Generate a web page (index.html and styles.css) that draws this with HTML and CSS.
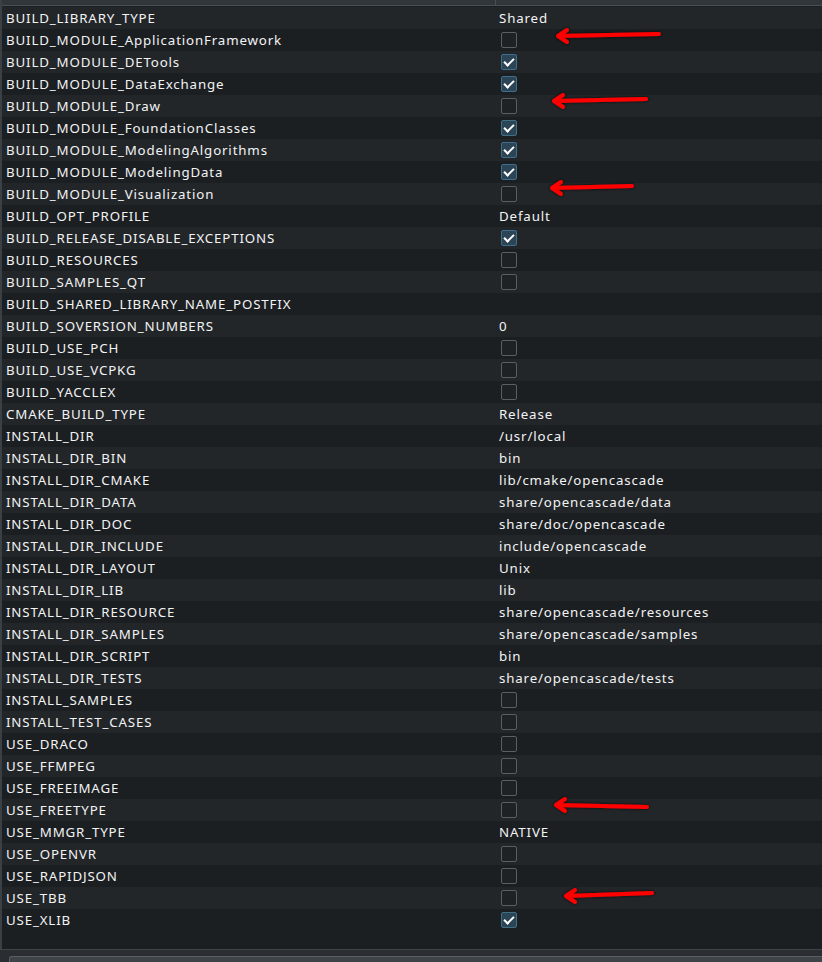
FILE: index.html
```html
<!DOCTYPE html>
<html>
<head>
<meta charset="utf-8">
<link rel="stylesheet" href="styles.css">
</head>
<body>
<div class="view">
  <div class="header"><div class="hcol"></div><div class="hcol"></div></div>
  <div class="rows">
    <div class="row"><span class="name">BUILD_LIBRARY_TYPE</span><span class="val">Shared</span></div>
    <div class="row"><span class="name">BUILD_MODULE_ApplicationFramework</span><span class="val"><span class="cb"></span></span></div>
    <div class="row"><span class="name">BUILD_MODULE_DETools</span><span class="val"><span class="cb on"></span></span></div>
    <div class="row"><span class="name">BUILD_MODULE_DataExchange</span><span class="val"><span class="cb on"></span></span></div>
    <div class="row"><span class="name">BUILD_MODULE_Draw</span><span class="val"><span class="cb"></span></span></div>
    <div class="row"><span class="name">BUILD_MODULE_FoundationClasses</span><span class="val"><span class="cb on"></span></span></div>
    <div class="row"><span class="name">BUILD_MODULE_ModelingAlgorithms</span><span class="val"><span class="cb on"></span></span></div>
    <div class="row"><span class="name">BUILD_MODULE_ModelingData</span><span class="val"><span class="cb on"></span></span></div>
    <div class="row"><span class="name">BUILD_MODULE_Visualization</span><span class="val"><span class="cb"></span></span></div>
    <div class="row"><span class="name">BUILD_OPT_PROFILE</span><span class="val">Default</span></div>
    <div class="row"><span class="name">BUILD_RELEASE_DISABLE_EXCEPTIONS</span><span class="val"><span class="cb on"></span></span></div>
    <div class="row"><span class="name">BUILD_RESOURCES</span><span class="val"><span class="cb"></span></span></div>
    <div class="row"><span class="name">BUILD_SAMPLES_QT</span><span class="val"><span class="cb"></span></span></div>
    <div class="row"><span class="name">BUILD_SHARED_LIBRARY_NAME_POSTFIX</span><span class="val"></span></div>
    <div class="row"><span class="name">BUILD_SOVERSION_NUMBERS</span><span class="val">0</span></div>
    <div class="row"><span class="name">BUILD_USE_PCH</span><span class="val"><span class="cb"></span></span></div>
    <div class="row"><span class="name">BUILD_USE_VCPKG</span><span class="val"><span class="cb"></span></span></div>
    <div class="row"><span class="name">BUILD_YACCLEX</span><span class="val"><span class="cb"></span></span></div>
    <div class="row"><span class="name">CMAKE_BUILD_TYPE</span><span class="val">Release</span></div>
    <div class="row"><span class="name">INSTALL_DIR</span><span class="val">/usr/local</span></div>
    <div class="row"><span class="name">INSTALL_DIR_BIN</span><span class="val">bin</span></div>
    <div class="row"><span class="name">INSTALL_DIR_CMAKE</span><span class="val">lib/cmake/opencascade</span></div>
    <div class="row"><span class="name">INSTALL_DIR_DATA</span><span class="val">share/opencascade/data</span></div>
    <div class="row"><span class="name">INSTALL_DIR_DOC</span><span class="val">share/doc/opencascade</span></div>
    <div class="row"><span class="name">INSTALL_DIR_INCLUDE</span><span class="val">include/opencascade</span></div>
    <div class="row"><span class="name">INSTALL_DIR_LAYOUT</span><span class="val">Unix</span></div>
    <div class="row"><span class="name">INSTALL_DIR_LIB</span><span class="val">lib</span></div>
    <div class="row"><span class="name">INSTALL_DIR_RESOURCE</span><span class="val">share/opencascade/resources</span></div>
    <div class="row"><span class="name">INSTALL_DIR_SAMPLES</span><span class="val">share/opencascade/samples</span></div>
    <div class="row"><span class="name">INSTALL_DIR_SCRIPT</span><span class="val">bin</span></div>
    <div class="row"><span class="name">INSTALL_DIR_TESTS</span><span class="val">share/opencascade/tests</span></div>
    <div class="row"><span class="name">INSTALL_SAMPLES</span><span class="val"><span class="cb"></span></span></div>
    <div class="row"><span class="name">INSTALL_TEST_CASES</span><span class="val"><span class="cb"></span></span></div>
    <div class="row"><span class="name">USE_DRACO</span><span class="val"><span class="cb"></span></span></div>
    <div class="row"><span class="name">USE_FFMPEG</span><span class="val"><span class="cb"></span></span></div>
    <div class="row"><span class="name">USE_FREEIMAGE</span><span class="val"><span class="cb"></span></span></div>
    <div class="row"><span class="name">USE_FREETYPE</span><span class="val"><span class="cb"></span></span></div>
    <div class="row"><span class="name">USE_MMGR_TYPE</span><span class="val">NATIVE</span></div>
    <div class="row"><span class="name">USE_OPENVR</span><span class="val"><span class="cb"></span></span></div>
    <div class="row"><span class="name">USE_RAPIDJSON</span><span class="val"><span class="cb"></span></span></div>
    <div class="row"><span class="name">USE_TBB</span><span class="val"><span class="cb"></span></span></div>
    <div class="row"><span class="name">USE_XLIB</span><span class="val"><span class="cb on"></span></span></div>
  </div>
  <div class="filler"></div>
</div>
<div class="bottom"><div class="btn"></div></div>

<svg class="marks" width="822" height="962" viewBox="0 0 822 962">
  <defs>
    <filter id="glow" x="-10%" y="-50%" width="120%" height="200%">
      <feDropShadow dx="0" dy="0" stdDeviation="1.6" flood-color="#000" flood-opacity="0.9"/>
    </filter>
  </defs>
  <g fill="none" stroke="#ff0000" stroke-width="4" stroke-linecap="round" stroke-linejoin="round" filter="url(#glow)">
    <path d="M659 34 L558 36 M567 30 L558 36 L567 42"/>
    <path d="M646 99 L554 101 M563 95 L554 101 L563 107"/>
    <path d="M632 186 L552 188 M561 182 L552 188 L561 194"/>
    <path d="M647 807 L556 805 M565 799 L556 805 L565 811"/>
    <path d="M652 893 L566 896 M575 890 L566 896 L575 902"/>
  </g>
</svg>
</body>
</html>
```

FILE: styles.css
```css
html, body {
  margin: 0;
  padding: 0;
}
body {
  width: 822px;
  height: 962px;
  overflow: hidden;
  background: #2a2e32;
  font-family: "Noto Sans", "DejaVu Sans", sans-serif;
  font-size: 13.3px;
  letter-spacing: 0.85px;
  color: #f2f3f4;
  position: relative;
}
.view {
  display: flex;
  flex-direction: column;
  height: 949px;
  border-left: 2px solid #3b4045;
  background: #1c1f22;
  box-sizing: border-box;
}
.header {
  height: 5px;
  background: #31363b;
  border-bottom: 1px solid #4a4f54;
  display: flex;
  flex: none;
}
.hcol {
  width: 493px;
  border-right: 1px solid #4a4f54;
}
.hcol + .hcol {
  border-right: none;
  flex: 1;
}
.rows {
  margin-top: 1px;
  flex: none;
}
.row {
  height: 22px;
  display: flex;
  align-items: center;
  white-space: nowrap;
}
.row:nth-child(odd) {
  background: #232629;
}
.row:nth-child(even) {
  background: #1c1f22;
}
.name {
  width: 497px;
  padding-left: 4px;
  box-sizing: border-box;
}
.val {
  display: flex;
  align-items: center;
}
.cb {
  display: block;
  width: 14px;
  height: 14px;
  margin-left: 2px;
  border: 1px solid #5a5e62;
  border-radius: 2px;
  background: #1f2225;
  position: relative;
}
.cb.on {
  background: #2c4556;
  border-color: #3f6e88;
}
.cb.on::after {
  content: "";
  position: absolute;
  left: 4px;
  top: 1px;
  width: 4px;
  height: 8px;
  border-right: 2px solid #ffffff;
  border-bottom: 2px solid #ffffff;
  transform: rotate(45deg);
}
.filler {
  flex: 1;
}
.bottom {
  height: 13px;
  border-top: 1px solid #3f4449;
  background: #2a2e32;
  position: relative;
  box-sizing: border-box;
}
.btn {
  margin: 6px 0 0 9px;
  height: 10px;
  border-radius: 3px 0 0 0;
  background: #3e4347;
  border-top: 1px solid #5a5f64;
  border-left: 1px solid #5a5f64;
}
.marks {
  position: absolute;
  left: 0;
  top: 0;
  pointer-events: none;
}
```
